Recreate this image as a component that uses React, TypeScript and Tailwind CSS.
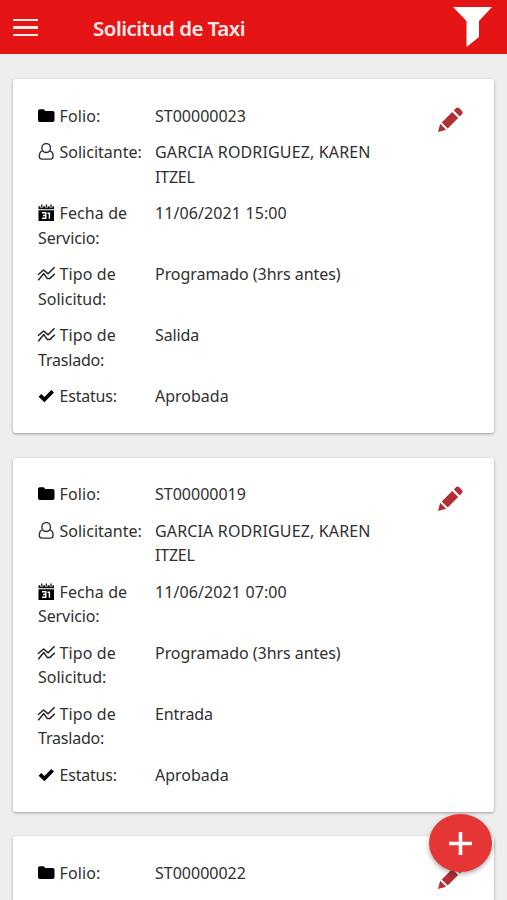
import React from 'react';

type Kind = 'folder' | 'user' | 'calendar' | 'chart' | 'check';

function RowIcon({ kind }: { kind: Kind }) {
  const base = 'inline-block align-[-3px] w-[17px] h-[18px] mr-[4.5px] overflow-visible';
  switch (kind) {
    case 'folder':
      return (
        <svg className={base} viewBox="0 0 17 18">
          <path d="M0 4Q0 2.2 1.8 2.2H5.3Q7 2.2 7 4H14.8Q16.5 4 16.5 5.7V13.2Q16.5 15 14.8 15H1.8Q0 15 0 13.2Z" fill="#000" />
        </svg>
      );
    case 'user':
      return (
        <svg className={base} viewBox="0 0 17 18" fill="none" stroke="#333" strokeWidth="1.4">
          <ellipse cx="8.2" cy="5" rx="4.3" ry="4.5" />
          <path d="M4.5 7.9C2.1 8.6 1.3 10.6 1.3 13.2Q1.3 16.1 4 16.1H12.4Q15.1 16.1 15.1 13.2C15.1 10.6 14.3 8.6 11.9 7.9" />
        </svg>
      );
    case 'calendar':
      return (
        <svg className={base} viewBox="0 0 17 18">
          <path d="M.5 6.3H16V17H.5Z" fill="#000" />
          <path d="M.5 5.2V2.3H2.2V3.6H5.2V2.3H7V3.6H9.8V2.3H11.5V3.6H14.5V2.3H16V5.2Z" fill="#111" />
          <path d="M3.7 .5V3M8.4 .5V3M13 .5V3" stroke="#222" strokeWidth="1.4" />
          <path d="M4 8.8H7.8V14.3H4M5 11.5H7.8M9.5 9.2H11.4V14.8" fill="none" stroke="#fff" strokeWidth="1.4" />
        </svg>
      );
    case 'chart':
      return (
        <svg className={base} viewBox="0 0 17 18" fill="none" stroke="#222" strokeWidth="1.5" strokeLinejoin="round">
          <path d="M0 9.8L5.6 5L10.2 8.8L16.5 2.2M0.3 15.2L5.8 8.6L9.2 13.4H12L16.8 8.8" />
        </svg>
      );
    case 'check':
      return (
        <svg className={base} viewBox="0 0 17 18">
          <path d="M.6 9.8L3.2 7L6.4 10L13.3 3L16 5.6L6.4 15.2Z" fill="#000" />
        </svg>
      );
  }
}

function Pencil() {
  return (
    <svg className="block w-[25px] h-[25px]" viewBox="0 0 25 25" fill="#b03035">
      <path d="M0 25L2.2 16.8L8.2 22.8Z" />
      <path d="M3.7 15.5L14.2 5L20.2 11L9.7 21.5Z" />
      <path d="M15.8 3.5L18.2 1.1Q19.6-.2 21.2 1.2L24 4Q25.3 5.5 24 7L21.8 9.4Z" />
    </svg>
  );
}

interface RowProps {
  icon: Kind;
  label: React.ReactNode;
  children: React.ReactNode;
}

function Row({ icon, label, children }: RowProps) {
  return (
    <div className="flex">
      <div className="w-[117px] shrink-0 whitespace-nowrap">
        <RowIcon kind={icon} />
        {label}
      </div>
      <div className="whitespace-nowrap">{children}</div>
    </div>
  );
}

interface CardProps {
  folio: string;
  details?: { date: string; transfer: string };
}

function Card({ folio, details }: CardProps) {
  return (
    <article className="flex h-[354px] shrink-0 justify-between rounded-[3px] bg-white pt-[24.4px] pl-[25px] pr-[31px] shadow-[0_1px_3px_rgba(0,0,0,0.35)]">
      <div className="flex flex-col gap-[12.2px]">
        <Row icon="folder" label={<span className="tracking-[0.1px]">Folio:</span>}>
          {folio}
        </Row>
        {details && (
          <>
            <Row icon="user" label="Solicitante:">
              <span className="tracking-[0.15px]">GARCIA RODRIGUEZ, KAREN</span><br />
              <span className="tracking-[-0.2px]">ITZEL</span>
            </Row>
            <Row icon="calendar" label={<><span className="tracking-[0.1px]">Fecha de</span><br /><span className="tracking-[-0.1px]">Servicio:</span></>}>
              <span className="tracking-[0.1px]">{details.date}</span>
            </Row>
            <Row icon="chart" label={<><span className="tracking-[0.1px]">Tipo de</span><br />Solicitud:</>}>
              <span className="tracking-[-0.05px]">Programado (3hrs antes)</span>
            </Row>
            <Row icon="chart" label={<><span className="tracking-[0.1px]">Tipo de</span><br /><span className="tracking-[-0.2px]">Traslado:</span></>}>
              <span className="tracking-[-0.1px]">{details.transfer}</span>
            </Row>
            <Row icon="check" label={<span className="tracking-[-0.2px]">Estatus:</span>}>Aprobada</Row>
          </>
        )}
      </div>
      <button aria-label="Editar" className="mt-[3.6px] h-[25px]"><Pencil /></button>
    </article>
  );
}

export default function App() {
  return (
    <div className="flex h-[900px] w-[507px] flex-col overflow-hidden bg-[#eeeeee] font-['Noto_Sans',sans-serif] text-[16px] leading-[24.4px] text-[#303030]">
      <header className="flex h-[54px] shrink-0 items-center bg-[#e51515] pl-[13px] pr-[15px] text-[#ffe9e9]">
        <button aria-label="Menú" className="mt-[1px] flex w-[25px] flex-col gap-[5px]">
          <span className="h-[2.4px] bg-current" />
          <span className="h-[2.4px] bg-current" />
          <span className="h-[2.4px] bg-current" />
        </button>
        <h1 className="ml-[55px] mt-[3px] whitespace-nowrap text-[20.5px] font-semibold tracking-[-0.5px]">Solicitud de Taxi</h1>
        <button aria-label="Filtrar" className="ml-auto">
          <svg className="block h-[40px] w-[39px]" viewBox="0 0 39 40"><path d="M0 0H39L26 14V30L13.5 40V14Z" fill="#fff" /></svg>
        </button>
      </header>
      <main className="flex flex-col gap-[24.6px] px-[13px] pt-[25.3px]">
        <Card folio="ST00000023" details={{ date: '11/06/2021 15:00', transfer: 'Salida' }} />
        <Card folio="ST00000019" details={{ date: '11/06/2021 07:00', transfer: 'Entrada' }} />
        <Card folio="ST00000022" />
      </main>
      <button aria-label="Agregar" className="absolute left-[429px] top-[814px] flex h-[58px] w-[63px] items-center justify-center rounded-[50%] bg-[#e53535] shadow-[0_2px_5px_rgba(0,0,0,0.35)]">
        <svg className="h-[23px] w-[23px]" viewBox="0 0 23 23"><path d="M0 11.5H23M11.5 0V23" stroke="#fff" strokeWidth="3.6" /></svg>
      </button>
    </div>
  );
}
